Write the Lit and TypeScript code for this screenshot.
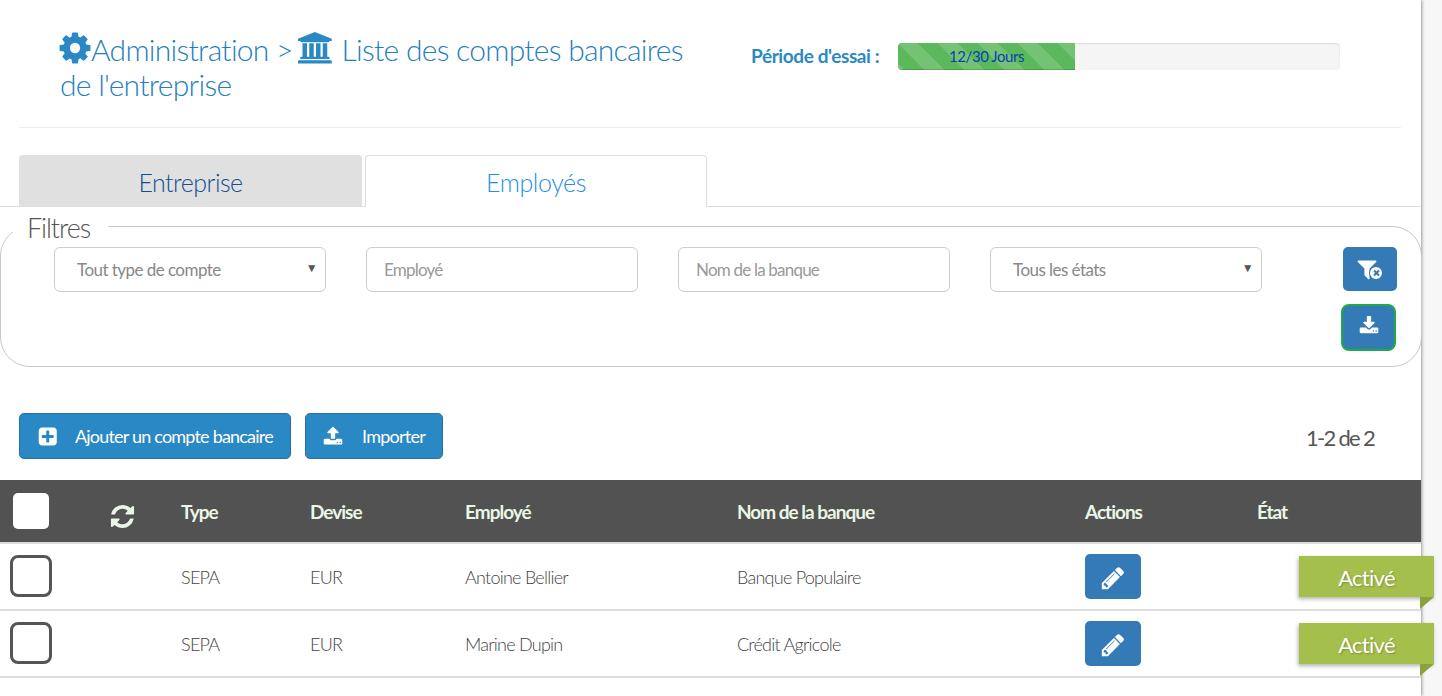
import { LitElement, html, css, svg } from "lit";
import { customElement } from "lit/decorators.js";

const ico = (d: string, vb = "0 0 1792 1792") => html`<svg class="ic" viewBox=${vb} fill="currentColor">${svg`<path d=${d}></path>`}</svg>`;
const COG = "M1152 896q0-106-75-181t-181-75-181 75-75 181 75 181 181 75 181-75 75-181zm512-109v222q0 12-8 23t-20 13l-185 28q-19 54-39 91 35 50 107 138 10 12 10 25t-9 23q-27 37-99 108t-94 71q-12 0-26-9l-138-108q-44 23-91 38-16 136-29 186-7 28-36 28h-222q-14 0-24.500-8.500t-11.500-21.500l-28-184q-49-16-90-37l-141 107q-10 9-25 9-14 0-25-11-126-114-165-168-7-10-7-23 0-12 8-23 15-21 51-66.500t54-70.500q-27-50-41-99l-183-27q-13-2-21-12.500t-8-23.500v-222q0-12 8-23t19-13l186-28q14-46 39-92-40-57-107-138-10-12-10-24 0-10 9-23 26-36 98.500-107.500t94.500-71.500q13 0 26 10l138 107q44-23 91-38 16-136 29-186 7-28 36-28h222q14 0 24.500 8.500t11.500 21.500l28 184q49 16 90 37l142-107q9-9 24-9 13 0 25 10 129 119 165 170 7 8 7 22 0 12-8 23-15 21-51 66.500t-54 70.500q26 50 41 98l183 28q13 2 21 12.500t8 23.500z";
const BANK = "M960 0l960 384v128h-128q0 26-20.500 45t-48.500 19h-1526q-28 0-48.500-19t-20.500-45h-128v-128zm-704 640h256v768h128v-768h256v768h128v-768h256v768h128v-768h256v768h59q28 0 48.500 19t20.500 45v64h-1664v-64q0-26 20.500-45t48.500-19h59v-768zm1595 960q28 0 48.500 19t20.500 45v128h-1920v-128q0-26 20.500-45t48.500-19h1782z";
const SYNC = "M1639 1056q0 5-1 7-64 268-268 434.500t-478 166.500q-146 0-282.500-55t-243.500-157l-129 129q-19 19-45 19t-45-19-19-45v-448q0-26 19-45t45-19h448q26 0 45 19t19 45-19 45l-137 137q71 66 161 102t187 36q134 0 250-65t186-179q11-17 53-117 8-23 30-23h192q13 0 22.500 9.500t9.500 22.500zm25-800v448q0 26-19 45t-45 19h-448q-26 0-45-19t-19-45 19-45l138-138q-148-137-349-137-134 0-250 65t-186 179q-11 17-53 117-8 23-30 23h-199q-13 0-22.500-9.500t-9.500-22.500v-7q65-268 270-434.500t480-166.500q146 0 284 55.500t245 156.500l130-129q19-19 45-19t45 19 19 45z";
const PENCIL = "M491 1536l91-91-235-235-91 91v107h128v128h107zm523-928q0-22-22-22-10 0-17 7l-542 542q-7 7-7 17 0 22 22 22 10 0 17-7l542-542q7-7 7-17zm-54-192l416 416-832 832h-416v-416zm683 96q0 53-37 90l-166 166-416-416 166-165q36-38 90-38 53 0 91 38l235 234q37 39 37 91z";
const PLUS = "M1344 960v-128q0-26-19-45t-45-19h-320v-320q0-26-19-45t-45-19h-128q-26 0-45 19t-19 45v320h-320q-26 0-45 19t-19 45v128q0 26 19 45t45 19h320v320q0 26 19 45t45 19h128q26 0 45-19t19-45v-320h320q26 0 45-19t19-45zm256-544v960q0 119-84.500 203.500t-203.500 84.500h-960q-119 0-203.500-84.500t-84.500-203.500v-960q0-119 84.500-203.500t203.500-84.500h960q119 0 203.500 84.500t84.500 203.500z";
const UPLOAD = "M1344 1472q0-26-19-45t-45-19-45 19-19 45 19 45 45 19 45-19 19-45zm256 0q0-26-19-45t-45-19-45 19-19 45 19 45 45 19 45-19 19-45zm128-224v320q0 40-28 68t-68 28h-1472q-40 0-68-28t-28-68v-320q0-40 28-68t68-28h427q21 56 70.500 92t110.500 36h256q61 0 110.500-36t70.500-92h427q40 0 68 28t28 68zm-325-648q-17 40-59 40h-256v448q0 26-19 45t-45 19h-256q-26 0-45-19t-19-45v-448h-256q-42 0-59-40-17-39 14-69l448-448q18-19 45-19t45 19l448 448q31 30 14 69z";
const DOWNLOAD = "M1344 1344q0-26-19-45t-45-19-45 19-19 45 19 45 45 19 45-19 19-45zm256 0q0-26-19-45t-45-19-45 19-19 45 19 45 45 19 45-19 19-45zm128-224v320q0 40-28 68t-68 28h-1472q-40 0-68-28t-28-68v-320q0-40 28-68t68-28h465l135 136q58 56 136 56t136-56l136-136h464q40 0 68 28t28 68zm-325-569q17 41-14 70l-448 448q-18 19-45 19t-45-19l-448-448q-31-29-14-70 17-39 59-39h256v-448q0-26 19-45t45-19h256q26 0 45 19t19 45v448h256q42 0 59 39z";
const FILTER = "M1595 295q17 41-14 70l-493 493v742q0 42-39 59-13 5-25 5-27 0-45-19l-256-256q-19-19-19-45v-486l-493-493q-31-29-14-70 17-39 59-39h1280q42 0 59 39z";

const rows = [
  { type: "SEPA", dev: "EUR", emp: "Antoine Bellier", bank: "Banque Populaire" },
  { type: "SEPA", dev: "EUR", emp: "Marine Dupin", bank: "Crédit Agricole" },
];

@customElement("app-root")
export class AppRoot extends LitElement {
  static styles = css`
    :host { display: block; width: 1442px; height: 696px; overflow: hidden; background: #f8f7f7;
      font-family: "Lato", "Roboto", sans-serif; color: #555; }
    .ic { display: block; }
    .page { width: 1421px; height: 696px; background: #fff; box-shadow: 1px 0 3px #999; position: relative; }
    .head { margin: 0 20px 0 19px; height: 127px; border-bottom: 1px solid #eee; display: flex; }
    h1 { flex: none; margin: 30px 0 0 41px; width: 650px; font-size: 30px; line-height: 35px; font-weight: 300; color: #1f80c0; letter-spacing: -0.72px; white-space: nowrap; }
    .cog { display: inline-block; width: 36px; height: 36px; vertical-align: -5px; margin: 0 -2px 0 -3px; color: #2a88c4; }
    .bank { display: inline-block; width: 36px; height: 32px; vertical-align: -3px; margin: 0 0 0 -2px; color: #2a88c4; }
    .trial { display: flex; align-items: center; height: 27px; margin: 43px 0 0 41px; }
    .trial b { font-size: 19px; font-weight: 700; color: #2a88c4; width: 147px; white-space: nowrap; letter-spacing: -0.4px; margin-top: -2px; }
    .bar { width: 442px; height: 27px; border-radius: 4px; background: #f5f5f5; box-shadow: inset 0 1px 2px rgba(0,0,0,.1); overflow: hidden; }
    .fill { width: 177px; height: 27px; line-height: 27px; text-align: center; font-size: 15px; letter-spacing: -0.45px; color: #0d3fb4;
      background-color: #5cb85c; box-shadow: inset 0 -1px 0 rgba(0,0,0,.15);
      background-image: linear-gradient(45deg, rgba(255,255,255,.15) 25%, transparent 25%, transparent 50%, rgba(255,255,255,.15) 50%, rgba(255,255,255,.15) 75%, transparent 75%, transparent);
      background-size: 40px 40px; }
    .tabs { display: flex; gap: 3px; padding: 27px 0 0 19px; height: 51px; border-bottom: 1px solid #ddd; }
    .tab { width: 342px; height: 51px; box-sizing: border-box; text-align: center; font-size: 25px; font-weight: 300; line-height: 54px; border-radius: 4px 4px 0 0; }
    .tab.off { width: 343px; background: #e0e0e0; color: #124f90; letter-spacing: -0.5px; }
    .tab.on { background: #fff; color: #2290e8; border: 1px solid #ddd; border-bottom: 0; height: 52px; line-height: 52px; letter-spacing: -0.4px; }
    fieldset { margin: 3px 0 0; padding: 0 24px 0 53px; height: 157px; box-sizing: border-box; border: 1px solid #c8c8c8; border-radius: 30px; }
    legend { margin-left: -41px; padding: 0 18px 0 14px; font-size: 27px; font-weight: 300; line-height: 36px; height: 32px; color: #555; letter-spacing: -1.1px; }
    .filters { display: flex; align-items: flex-start; margin-top: 5px; }
    .fld { width: 272px; height: 45px; box-sizing: border-box; margin-right: 40px; border: 1px solid #ccc; border-radius: 6px; font: inherit; font-size: 17px; letter-spacing: -0.8px; color: #888; background: #fff; padding: 0 17px; outline: 0; white-space: nowrap; }
    .fld::placeholder { color: #999; }
    .sel { display: flex; align-items: center; justify-content: space-between; padding: 0 8px 0 22px; letter-spacing: -0.55px; }
    .sel i { font-style: normal; font-size: 12px; color: #555; margin-top: -5px; }
    .tools { margin-left: 41px; display: flex; flex-direction: column; gap: 13px; }
    .tool { width: 54px; height: 44px; border-radius: 5px; background: #337ab7; color: #fff; display: flex; align-items: center; justify-content: center; position: relative; box-sizing: border-box; }
    .tool.focus { width: 55px; height: 47px; margin-left: -2px; border: 2.500px solid #1fab4a; border-radius: 8px; }
    .tool .ic { width: 20px; height: 20px; }
    .tool.focus .ic { margin-top: -3px; }
    .tool .ic.big { width: 24px; height: 24px; margin-left: -6px; }
    .x { position: absolute; left: 27px; top: 20px; width: 12px; height: 12px; border-radius: 50%; background: #fff; box-shadow: 0 0 0 1px #337ab7; box-sizing: border-box; }
    .x::before, .x::after { content: ""; position: absolute; left: 2.500px; top: 5px; width: 7px; height: 2px; background: #337ab7; transform: rotate(45deg); }
    .x::after { transform: rotate(-45deg); }
    .actions { display: flex; align-items: flex-start; padding: 46px 47px 0 19px; height: 67px; gap: 14px; }
    .btn { height: 46px; border: 1px solid #2a6ea8; box-sizing: border-box; border-radius: 5px; background: #2a88c4; color: #fff; display: flex; align-items: center; font-size: 18px; white-space: nowrap; }
    .b1 { width: 272px; padding-left: 18px; gap: 16px; letter-spacing: -0.8px; }
    .b1 .ic { width: 21px; height: 21px; }
    .b2 { width: 138px; padding-left: 17px; gap: 19px; letter-spacing: -0.75px; }
    .b2 .ic { width: 20px; height: 20px; }
    .count { margin-left: auto; margin-top: 10px; font-size: 22px; line-height: 30px; color: #555; letter-spacing: -1.7px; }
    .grid { display: grid; grid-template-columns: 181px 129px 155px 272px 348px 172px 1fr; align-items: center; }
    .thead { height: 62px; background: #525252; border-bottom: 2px solid #ddd; color: #eaf6e6; font-size: 19px; font-weight: 700; letter-spacing: -1px; }
    .row { height: 65px; border-bottom: 2px solid #ddd; font-size: 18px; font-weight: 300; color: #444; letter-spacing: -0.75px; }
    .c0 { position: relative; height: 100%; }
    .hbox { position: absolute; left: 13px; top: 13px; width: 36px; height: 36px; border-radius: 5px; background: #fff; }
    .sync { position: absolute; left: 109px; top: 23px; color: #eaf6e6; }
    .sync .ic { width: 27px; height: 27px; }
    .rbox { position: absolute; left: 10px; top: 11px; width: 42px; height: 42px; box-sizing: border-box; border: 3px solid #555; border-radius: 8px; background: #fff; }
    .edit { width: 56px; height: 45px; background: #337ab7; border-radius: 5px; color: #fff; display: flex; align-items: center; justify-content: center; }
    .edit .ic { width: 26px; height: 26px; margin-top: 3px; }
    .ribbon { position: relative; width: 135px; height: 41px; margin-left: 42px; background: #a5bf4d; color: #fff; font-size: 22px; font-weight: 400; letter-spacing: -0.7px; line-height: 43px; text-align: center; text-shadow: 1px 1px 2px rgba(0,0,0,.25); box-shadow: -1px 2px 4px rgba(0,0,0,.3); }
    .ribbon::after { content: ""; position: absolute; left: 121px; top: 41px; border-top: 12px solid #8ba23c; border-right: 14px solid transparent; }
  `;

  render() {
    return html`<div class="page">
      <div class="head">
        <h1><span class="cog">${ico(COG)}</span>Administration &gt; <span class="bank">${ico(BANK, "0 0 2048 1792")}</span> Liste des comptes bancaires<br />de l'entreprise</h1>
        <div class="trial"><b>Période d'essai :</b><div class="bar"><div class="fill">12/30 Jours</div></div></div>
      </div>
      <div class="tabs"><div class="tab off">Entreprise</div><div class="tab on">Employés</div></div>
      <fieldset>
        <legend>Filtres</legend>
        <div class="filters">
          <div class="fld sel">Tout type de compte<i>▼</i></div>
          <input class="fld" placeholder="Employé" />
          <input class="fld" placeholder="Nom de la banque" />
          <div class="fld sel">Tous les états<i>▼</i></div>
          <div class="tools">
            <div class="tool"><svg class="ic big" viewBox="0 0 1792 1792" fill="currentColor">${svg`<path d=${FILTER}></path>`}</svg><span class="x"></span></div>
            <div class="tool focus">${ico(DOWNLOAD)}</div>
          </div>
        </div>
      </fieldset>
      <div class="actions">
        <div class="btn b1">${ico(PLUS)}Ajouter un compte bancaire</div>
        <div class="btn b2">${ico(UPLOAD)}Importer</div>
        <div class="count">1-2 de 2</div>
      </div>
      <div class="grid thead">
        <div class="c0"><span class="hbox"></span><span class="sync">${ico(SYNC)}</span></div>
        <div>Type</div><div>Devise</div><div>Employé</div><div>Nom de la banque</div><div>Actions</div><div>État</div>
      </div>
      ${rows.map(r => html`<div class="grid row">
        <div class="c0"><span class="rbox"></span></div>
        <div>${r.type}</div><div>${r.dev}</div><div>${r.emp}</div><div>${r.bank}</div>
        <div><div class="edit">${ico(PENCIL)}</div></div>
        <div><div class="ribbon">Activé</div></div>
      </div>`)}
    </div>`;
  }
}
